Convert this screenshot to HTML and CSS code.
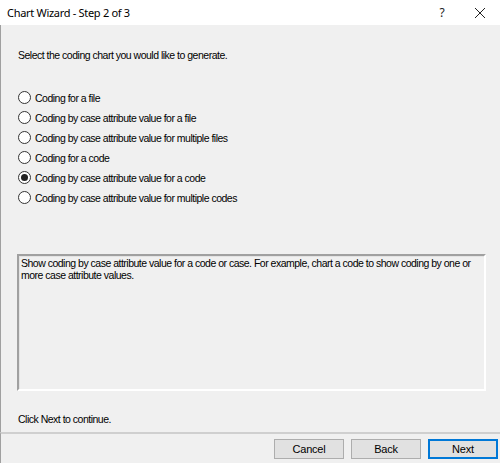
FILE: index.html
```html
<!DOCTYPE html>
<html>
<head>
<meta charset="utf-8">
<link rel="stylesheet" href="styles.css">
</head>
<body>
<div class="window">
  <div class="titlebar">
    <span class="title">Chart Wizard - Step 2 of 3</span>
    <span class="tb-help">?</span>
    <span class="tb-close">
      <svg width="12" height="12" viewBox="0 0 12 12"><path d="M1 1L11 11M11 1L1 11" stroke="#222" stroke-width="1" fill="none"/></svg>
    </span>
  </div>
  <div class="content">
    <p class="prompt">Select the coding chart you would like to generate.</p>
    <div class="options">
      <div class="opt"><span class="radio"></span><span>Coding for a file</span></div>
      <div class="opt"><span class="radio"></span><span>Coding by case attribute value for a file</span></div>
      <div class="opt"><span class="radio"></span><span>Coding by case attribute value for multiple files</span></div>
      <div class="opt"><span class="radio"></span><span>Coding for a code</span></div>
      <div class="opt"><span class="radio checked"></span><span>Coding by case attribute value for a code</span></div>
      <div class="opt"><span class="radio"></span><span>Coding by case attribute value for multiple codes</span></div>
    </div>
    <div class="desc">Show coding by case attribute value for a code or case. For example, chart a code to show coding by one or more case attribute values.</div>
    <p class="hint">Click Next to continue.</p>
  </div>
  <div class="footer">
    <button class="btn">Cancel</button>
    <button class="btn">Back</button>
    <button class="btn default">Next</button>
  </div>
</div>
</body>
</html>
```

FILE: styles.css
```css
html, body {
  margin: 0;
  padding: 0;
}
body {
  width: 500px;
  height: 463px;
  overflow: hidden;
  background: #f0f0f0;
  font-family: "Liberation Sans", Arial, sans-serif;
  font-size: 10.5px;
  letter-spacing: -0.5px;
  color: #000;
}
.window {
  width: 500px;
  height: 463px;
  display: flex;
  flex-direction: column;
  box-sizing: border-box;
}
.titlebar {
  height: 25px;
  background: #fff;
  display: flex;
  align-items: center;
  flex-shrink: 0;
}
.title {
  font-family: "Noto Sans", "Open Sans", sans-serif;
  font-size: 11px;
  letter-spacing: -0.3px;
  padding-left: 7px;
  flex: 1;
  color: #000;
}
.tb-help {
  font-family: "Noto Sans", sans-serif;
  font-size: 12px;
  letter-spacing: 0;
  width: 20px;
  text-align: center;
  margin-right: 22px;
  color: #222;
}
.tb-close {
  width: 12px;
  height: 12px;
  margin-right: 14px;
  display: flex;
}
.content {
  flex: 1;
  border-left: 1px solid #a0a0a0;
  padding: 0 13px 0 16px;
  display: flex;
  flex-direction: column;
}
.prompt {
  margin: 23px 0 0 1px;
  line-height: 14px;
}
.options {
  margin-top: 29px;
  display: flex;
  flex-direction: column;
  gap: 7px;
}
.opt {
  display: flex;
  align-items: center;
  height: 13px;
  gap: 4px;
  padding-left: 1px;
}
.radio {
  width: 11px;
  height: 11px;
  border: 1px solid #333;
  border-radius: 50%;
  background: #fff;
  display: flex;
  align-items: center;
  justify-content: center;
  flex-shrink: 0;
}
.radio.checked::after {
  content: "";
  width: 7px;
  height: 7px;
  border-radius: 50%;
  background: #222;
}
.desc {
  margin-top: 50px;
  height: 137px;
  box-sizing: border-box;
  border-style: solid;
  border-width: 2px;
  border-color: #a0a0a0 #fff #fff #a0a0a0;
  box-shadow: inset 1px 1px 0 #e3e3e3;
  padding: 1px 2px;
  line-height: 12px;
  margin-right: 1px;
}
.hint {
  margin: 21px 0 0 1px;
  line-height: 14px;
}
.footer {
  flex-shrink: 0;
  border-top: 2px solid #cfcfcf;
  border-left: 1px solid #a0a0a0;
  height: 31px;
  display: flex;
  justify-content: flex-end;
  align-items: flex-start;
  padding: 5px 2px 0 0;
  gap: 7px;
  box-sizing: border-box;
}
.btn {
  width: 70px;
  height: 20px;
  background: #e1e1e1;
  border: 1px solid #adadad;
  font-family: "Liberation Sans", Arial, sans-serif;
  font-size: 11px;
  letter-spacing: -0.2px;
  color: #000;
  padding: 0;
  margin: 0;
}
.btn.default {
  border: 1px solid #0078d7;
  box-shadow: inset 0 0 0 1px #0078d7;
}
```
